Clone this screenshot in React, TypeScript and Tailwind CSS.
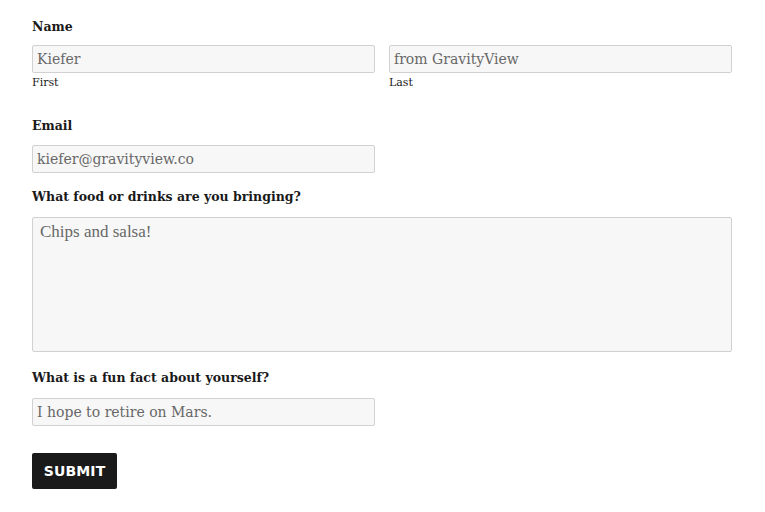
import React from 'react'

const serif = 'font-["DejaVu_Serif","Liberation_Serif",serif]'

function Label({ children, className = '' }: { children: React.ReactNode; className?: string }) {
  return (
    <div className={`${serif} text-[12.5px] font-bold leading-[22px] text-[#1a1a1a] ${className}`}>{children}</div>
  )
}

function Field({ value, className = '' }: { value: string; className?: string }) {
  return (
    <div
      className={`${serif} flex h-[28px] items-center rounded-[2px] border border-[#d1d1d1] bg-[#f7f7f7] px-[4px] text-[14px] text-[#686868] ${className}`}
    >
      {value}
    </div>
  )
}

export default function App() {
  return (
    <div className="min-h-[512px] w-[765px] bg-white px-[32px] pt-[16px]">
      <div className="w-[700px]">
        <Label className="mb-[7px]">Name</Label>
        <div className="grid grid-cols-2 gap-x-[14px]">
          <div>
            <Field value="Kiefer" />
            <div className={`${serif} mt-[2px] text-[11px] leading-[16px] text-[#1a1a1a]`}>First</div>
          </div>
          <div>
            <Field value="from GravityView" />
            <div className={`${serif} mt-[2px] text-[11px] leading-[16px] text-[#1a1a1a]`}>Last</div>
          </div>
        </div>

        <Label className="mb-[8px] mt-[24px]">Email</Label>
        <Field value="kiefer@gravityview.co" className="w-[343px]" />

        <Label className="mb-[9px] mt-[13px]">What food or drinks are you bringing?</Label>
        <div className="h-[135px] rounded-[2px] border border-[#d1d1d1] bg-[#f7f7f7] px-[7px] py-[3px] font-['Liberation_Serif',serif] text-[17px] leading-[22px] text-[#686868]">
          Chips and salsa!
        </div>

        <Label className="mb-[9px] mt-[15px]">What is a fun fact about yourself?</Label>
        <Field value="I hope to retire on Mars." className="w-[343px]" />

        <button className="mt-[27px] flex h-[36px] w-[85px] items-center justify-center rounded-[2px] bg-[#1a1a1a] font-['DejaVu_Sans',sans-serif] text-[14px] font-bold tracking-[0.01em] text-white">
          SUBMIT
        </button>
      </div>
    </div>
  )
}
